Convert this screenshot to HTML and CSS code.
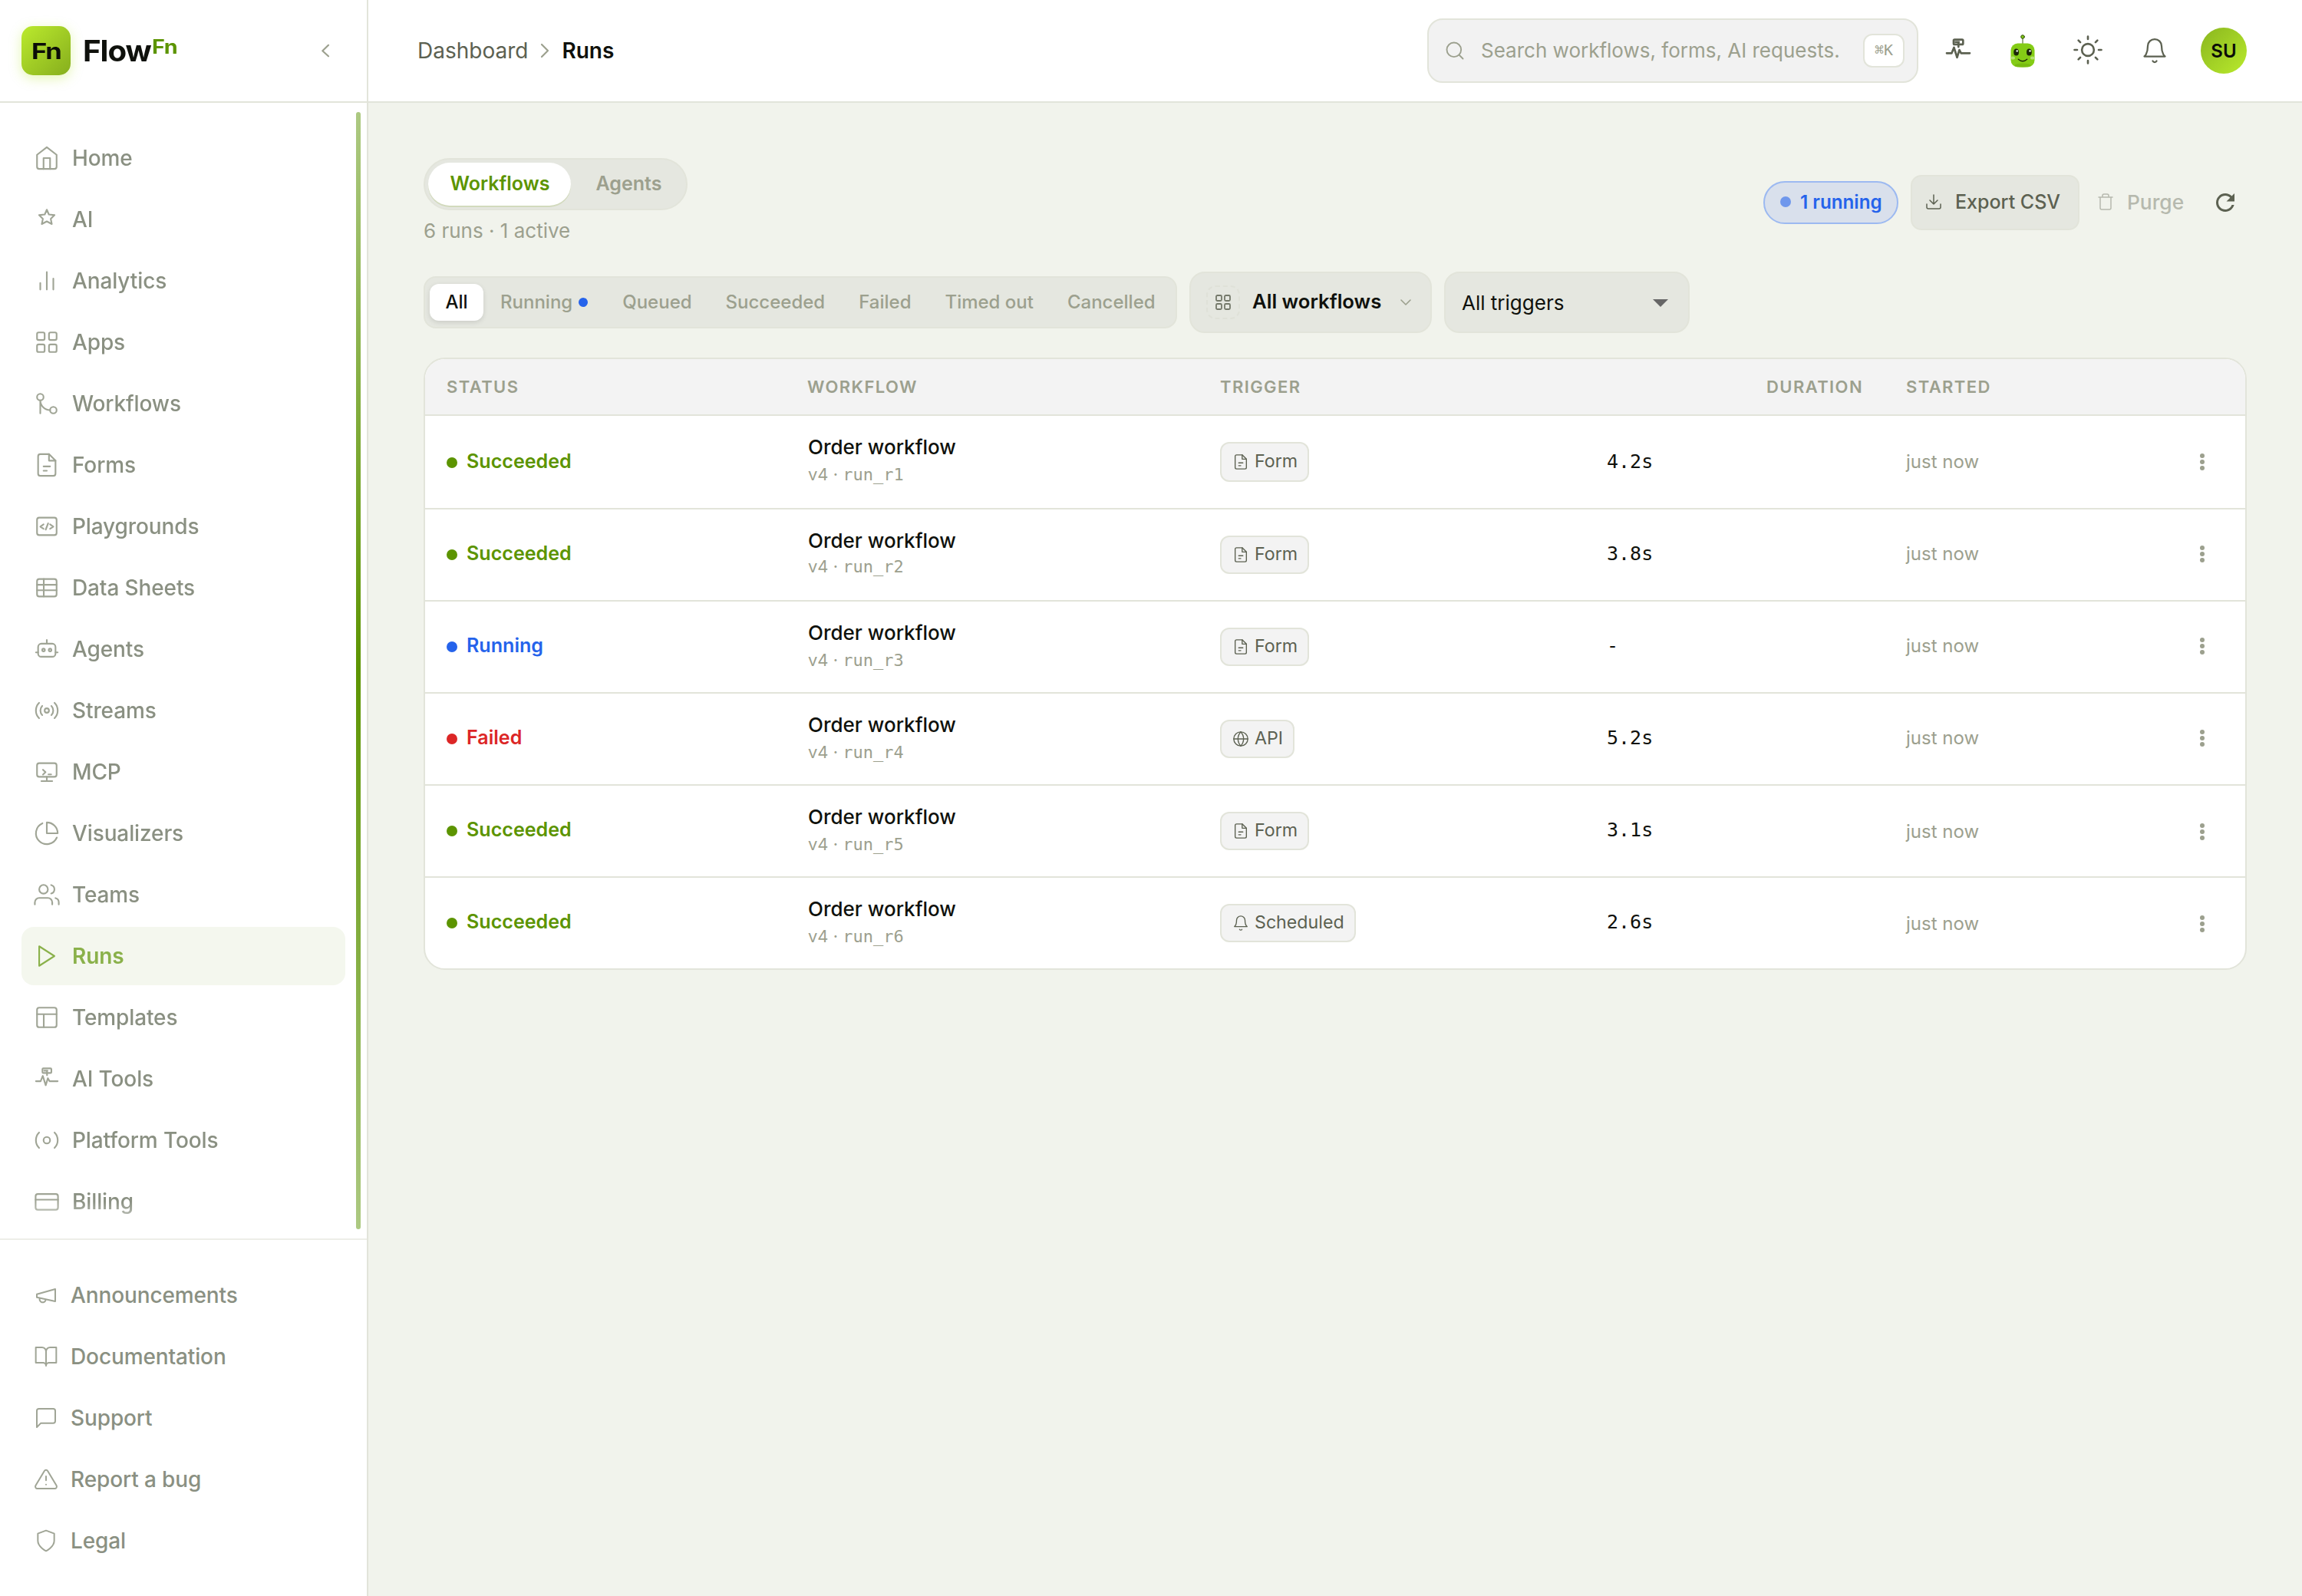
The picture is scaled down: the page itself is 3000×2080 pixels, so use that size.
FILE: index.html
```html
<!DOCTYPE html>
<html lang="en">
<head>
<meta charset="utf-8">
<title>FlowFn - Runs</title>
<link rel="stylesheet" href="styles.css">
</head>
<body>
<svg class="sprite" aria-hidden="true">
  <symbol id="i-home" viewBox="0 0 24 24"><path d="M3 9l9-7 9 7v11a2 2 0 0 1-2 2H5a2 2 0 0 1-2-2z"/><path d="M9 22V12h6v10"/></symbol>
  <symbol id="i-star" viewBox="0 0 24 24"><path d="M12 3l1.900 4.400 5.200.6-3.500 3.400 1 4.800L12 13.800l-4.600 2.400 1-4.800L4.900 8l5.200-.6z"/></symbol>
  <symbol id="i-bars" viewBox="0 0 24 24"><path d="M18 20V10M12 20V4M6 20v-6"/></symbol>
  <symbol id="i-grid" viewBox="0 0 24 24"><rect x="3" y="3" width="7" height="7" rx="1.5"/><rect x="14" y="3" width="7" height="7" rx="1.5"/><rect x="3" y="14" width="7" height="7" rx="1.5"/><rect x="14" y="14" width="7" height="7" rx="1.5"/></symbol>
  <symbol id="i-flow" viewBox="0 0 24 24"><circle cx="6" cy="6" r="3"/><circle cx="18" cy="18" r="3"/><path d="M6 9v12M6 9a9 9 0 0 0 9 9"/></symbol>
  <symbol id="i-file" viewBox="0 0 24 24"><path d="M14 2H6a2 2 0 0 0-2 2v16a2 2 0 0 0 2 2h12a2 2 0 0 0 2-2V8z"/><path d="M14 2v6h6M9 13.300h6M9 17.300h3"/></symbol>
  <symbol id="i-code" viewBox="0 0 24 24"><rect x="3" y="4" width="18" height="16" rx="2"/><path d="M9 10.200l-3 2 3 2M13.200 9.200L11 15M15 10.200l3 2-3 2"/></symbol>
  <symbol id="i-sheet" viewBox="0 0 24 24"><rect x="3" y="4" width="18" height="16" rx="2"/><path d="M3 9.300h18M3 14.300h18M9.200 4v16"/></symbol>
  <symbol id="i-agent" viewBox="0 0 24 24"><rect x="4" y="7" width="16" height="12" rx="3"/><path d="M12 3.500V7M2 15h2M20 15h2"/><circle cx="9" cy="12.800" r="1.200"/><circle cx="15" cy="12.800" r="1.200"/></symbol>
  <symbol id="i-stream" viewBox="0 0 24 24"><circle cx="12" cy="12" r="2"/><path d="M4.900 19.100C1 15.200 1 8.800 4.900 4.900M7.800 16.200c-2.300-2.300-2.300-6.100 0-8.500M16.200 7.800c2.300 2.300 2.300 6.100 0 8.500M19.100 4.900C23 8.800 23 15.100 19.100 19"/></symbol>
  <symbol id="i-mcp" viewBox="0 0 24 24"><rect x="3" y="4" width="18" height="12.500" rx="2"/><path d="M12 16.500v4M7 20.500h10M8.500 10l2.300 2.200-2.300 2.200M13.500 14.300H16"/></symbol>
  <symbol id="i-pie" viewBox="0 0 24 24"><path d="M21.200 15.900A10 10 0 1 1 8 2.800"/><path d="M22 12A10 10 0 0 0 12 2v10z"/></symbol>
  <symbol id="i-users" viewBox="0 0 24 24"><path d="M17 21v-2a4 4 0 0 0-4-4H5a4 4 0 0 0-4 4v2"/><circle cx="9" cy="7" r="4"/><path d="M23 21v-2a4 4 0 0 0-3-3.870M16 3.130a4 4 0 0 1 0 7.750"/></symbol>
  <symbol id="i-play" viewBox="0 0 24 24"><path d="M5 3l14 9-14 9z"/></symbol>
  <symbol id="i-layout" viewBox="0 0 24 24"><rect x="3" y="3" width="18" height="18" rx="2"/><path d="M3 9h18M9.200 9v12"/></symbol>
  <symbol id="i-pulse" viewBox="0 0 24 24"><rect x="8" y="2.400" width="8.200" height="4.200" rx=".8"/><path d="M9.600 4.500h3M12.200 4.500v4.200M2 14.200h4.300L8.300 9.300l2.700 8.600 2-6.500 1.500 2.800H22"/></symbol>
  <symbol id="i-platform" viewBox="0 0 24 24"><circle cx="12" cy="12" r="3"/><path d="M4.900 19.100C1 15.200 1 8.800 4.900 4.900M19.100 4.900C23 8.800 23 15.100 19.100 19"/></symbol>
  <symbol id="i-card" viewBox="0 0 24 24"><rect x="1.700" y="5" width="20.600" height="14.500" rx="2"/><path d="M1.700 10.200h20.600"/></symbol>
  <symbol id="i-horn" viewBox="0 0 24 24"><path d="M3 11l18-5v12L3 14z"/><path d="M11.600 16.800a3 3 0 1 1-5.800-1.600"/></symbol>
  <symbol id="i-book" viewBox="0 0 24 24"><path d="M2 3h6a4 4 0 0 1 4 4v14a3 3 0 0 0-3-3H2zM22 3h-6a4 4 0 0 0-4 4v14a3 3 0 0 1 3-3h7z"/></symbol>
  <symbol id="i-chat" viewBox="0 0 24 24"><path d="M21 15a2 2 0 0 1-2 2H7l-4 4V5a2 2 0 0 1 2-2h14a2 2 0 0 1 2 2z"/></symbol>
  <symbol id="i-alert" viewBox="0 0 24 24"><path d="M10.290 3.860L1.820 18a2 2 0 0 0 1.710 3h16.940a2 2 0 0 0 1.710-3L13.710 3.860a2 2 0 0 0-3.420 0zM12 9v4M12 17h.01"/></symbol>
  <symbol id="i-shield" viewBox="0 0 24 24"><path d="M12 22s8-4 8-10V5l-8-3-8 3v7c0 6 8 10 8 10z"/></symbol>
  <symbol id="i-search" viewBox="0 0 24 24"><circle cx="11" cy="11" r="8"/><path d="M21 21l-4.300-4.300"/></symbol>
  <symbol id="i-sun" viewBox="0 0 24 24"><circle cx="12" cy="12" r="4.500"/><path d="M12 2v2M12 20v2M4.930 4.930l1.410 1.410M17.660 17.660l1.410 1.410M2 12h2M20 12h2M6.340 17.660l-1.410 1.410M19.070 4.930l-1.410 1.410"/></symbol>
  <symbol id="i-bell" viewBox="0 0 24 24"><path d="M6 8a6 6 0 0 1 12 0c0 7 3 9 3 9H3s3-2 3-9"/><path d="M10.300 21a1.940 1.940 0 0 0 3.400 0"/></symbol>
  <symbol id="i-download" viewBox="0 0 24 24"><path d="M21 15v4a2 2 0 0 1-2 2H5a2 2 0 0 1-2-2v-4M7 10l5 5 5-5M12 15V3"/></symbol>
  <symbol id="i-trash" viewBox="0 0 24 24"><path d="M3 6h18M19 6v14a2 2 0 0 1-2 2H7a2 2 0 0 1-2-2V6M8 6V4a2 2 0 0 1 2-2h4a2 2 0 0 1 2 2v2"/></symbol>
  <symbol id="i-refresh" viewBox="0 0 24 24"><path d="M17.650 6.350A7.958 7.958 0 0 0 12 4c-4.420 0-7.990 3.580-7.990 8s3.570 8 7.990 8c3.730 0 6.840-2.550 7.730-6h-2.080c-.82 2.330-3.040 4-5.650 4-3.310 0-6-2.690-6-6s2.690-6 6-6c1.660 0 3.140.69 4.220 1.780L13 11h7V4z"/></symbol>
  <symbol id="i-globe" viewBox="0 0 24 24"><circle cx="12" cy="12" r="10"/><path d="M2 12h20M12 2a15.300 15.300 0 0 1 4 10 15.300 15.300 0 0 1-4 10 15.300 15.300 0 0 1-4-10 15.300 15.300 0 0 1 4-10z"/></symbol>
  <symbol id="i-more" viewBox="0 0 24 24"><circle cx="12" cy="4" r="3"/><circle cx="12" cy="12" r="3"/><circle cx="12" cy="20" r="3"/></symbol>
</svg>

<div class="app">
  <aside class="sidebar">
    <div class="brand">
      <div class="brand-mark"><span>Fn</span></div>
      <div class="brand-name">Flow</div>
      <div class="brand-sup">Fn</div>
      <svg class="collapse" viewBox="0 0 24 24"><path d="M16 4.800L8.300 12.300l7.700 7"/></svg>
    </div>
    <div class="nav-wrap">
      <nav class="nav">
        <a class="nav-item"><svg><use href="#i-home"/></svg>Home</a>
        <a class="nav-item"><svg><use href="#i-star"/></svg>AI</a>
        <a class="nav-item"><svg><use href="#i-bars"/></svg>Analytics</a>
        <a class="nav-item"><svg><use href="#i-grid"/></svg>Apps</a>
        <a class="nav-item"><svg><use href="#i-flow"/></svg>Workflows</a>
        <a class="nav-item"><svg><use href="#i-file"/></svg>Forms</a>
        <a class="nav-item"><svg><use href="#i-code"/></svg>Playgrounds</a>
        <a class="nav-item"><svg><use href="#i-sheet"/></svg>Data Sheets</a>
        <a class="nav-item"><svg><use href="#i-agent"/></svg>Agents</a>
        <a class="nav-item"><svg><use href="#i-stream"/></svg>Streams</a>
        <a class="nav-item"><svg><use href="#i-mcp"/></svg>MCP</a>
        <a class="nav-item"><svg><use href="#i-pie"/></svg>Visualizers</a>
        <a class="nav-item"><svg><use href="#i-users"/></svg>Teams</a>
        <a class="nav-item active"><svg><use href="#i-play"/></svg>Runs</a>
        <a class="nav-item"><svg><use href="#i-layout"/></svg>Templates</a>
        <a class="nav-item"><svg><use href="#i-pulse"/></svg>AI Tools</a>
        <a class="nav-item"><svg><use href="#i-platform"/></svg>Platform Tools</a>
        <a class="nav-item"><svg><use href="#i-card"/></svg>Billing</a>
      </nav>
      <div class="scrollbar"></div>
    </div>
    <nav class="nav nav-footer">
      <a class="nav-item"><svg><use href="#i-horn"/></svg>Announcements</a>
      <a class="nav-item"><svg><use href="#i-book"/></svg>Documentation</a>
      <a class="nav-item"><svg><use href="#i-chat"/></svg>Support</a>
      <a class="nav-item"><svg><use href="#i-alert"/></svg>Report a bug</a>
      <a class="nav-item"><svg><use href="#i-shield"/></svg>Legal</a>
    </nav>
  </aside>

  <div class="page">
    <header class="topbar">
      <div class="crumbs">
        <span>Dashboard</span>
        <svg viewBox="0 0 12 20"><path d="M2 2l8 8-8 8"/></svg>
        <b>Runs</b>
      </div>
      <div class="search">
        <svg><use href="#i-search"/></svg>
        <span>Search workflows, forms, AI requests.</span>
        <kbd>⌘K</kbd>
      </div>
      <div class="tools">
        <button class="tool pulse"><svg><use href="#i-pulse"/></svg></button>
        <button class="tool robot">
          <svg viewBox="0 0 36 44">
            <path d="M18 4v10" stroke="#3d5a12" stroke-width="1"/>
            <circle cx="18" cy="4" r="2.300" fill="#84cc16" stroke="#2f4a0c" stroke-width="1"/>
            <rect x="2.500" y="12.500" width="31" height="31" rx="9" fill="#84cc16"/>
            <ellipse cx="18" cy="41" rx="10.500" ry="2.500" fill="#78bb12"/>
            <ellipse cx="9.600" cy="24" rx="3.400" ry="4.500" fill="#1a2608"/>
            <ellipse cx="26.400" cy="24" rx="3.400" ry="4.500" fill="#1a2608"/>
            <circle cx="10.700" cy="22.400" r="1.200" fill="#fff"/>
            <circle cx="27.500" cy="22.400" r="1.200" fill="#fff"/>
            <ellipse cx="5.200" cy="31.500" rx="2.800" ry="2" fill="#b5e373"/>
            <ellipse cx="30.800" cy="31.500" rx="2.800" ry="2" fill="#b5e373"/>
            <path d="M12.300 33.300q5.700 5 11.400 0" fill="none" stroke="#1a2608" stroke-width="1.300" stroke-linecap="round"/>
          </svg>
        </button>
        <button class="tool sun"><svg><use href="#i-sun"/></svg></button>
        <button class="tool bell"><svg><use href="#i-bell"/></svg></button>
        <div class="avatar">SU</div>
      </div>
    </header>

    <main class="content">
      <section class="page-head">
        <div>
          <div class="tabs"><button class="tab on">Workflows</button><button class="tab">Agents</button></div>
          <p class="summary">6 runs · 1 active</p>
        </div>
        <div class="actions">
          <span class="running-pill"><i></i>1 running</span>
          <button class="export"><svg><use href="#i-download"/></svg>Export CSV</button>
          <button class="purge"><svg><use href="#i-trash"/></svg>Purge</button>
          <button class="refresh"><svg><use href="#i-refresh"/></svg></button>
        </div>
      </section>

      <section class="filters">
        <div class="segments">
          <button class="seg on">All</button>
          <button class="seg">Running<i></i></button>
          <button class="seg">Queued</button>
          <button class="seg">Succeeded</button>
          <button class="seg">Failed</button>
          <button class="seg">Timed out</button>
          <button class="seg">Cancelled</button>
        </div>
        <div class="select workflow-select">
          <span class="select-icon"><svg><use href="#i-grid"/></svg></span>
          <span class="select-label">All workflows</span>
          <svg class="chev" viewBox="0 0 16 10"><path d="M2 2l6 6 6-6"/></svg>
        </div>
        <div class="select trigger-select">
          <span>All triggers</span>
          <svg class="caret" viewBox="0 0 20 10"><path d="M0 0h20L10 10z"/></svg>
        </div>
      </section>

      <section class="table">
        <div class="row head"><span>Status</span><span>Workflow</span><span>Trigger</span><span class="right">Duration</span><span>Started</span><span></span></div>
        <div class="row first">
          <span class="status ok"><i></i>Succeeded</span>
          <span class="flow"><b>Order workflow</b><small>v4 · <code>run_r1</code></small></span>
          <span><em class="badge"><svg><use href="#i-file"/></svg><span>Form</span></em></span>
          <span class="duration">4.2s</span><span class="started">just now</span>
          <span class="menu"><svg><use href="#i-more"/></svg></span>
        </div>
        <div class="row snug">
          <span class="status ok"><i></i>Succeeded</span>
          <span class="flow"><b>Order workflow</b><small>v4 · <code>run_r2</code></small></span>
          <span><em class="badge"><svg><use href="#i-file"/></svg><span>Form</span></em></span>
          <span class="duration">3.8s</span><span class="started">just now</span>
          <span class="menu"><svg><use href="#i-more"/></svg></span>
        </div>
        <div class="row">
          <span class="status live"><i></i>Running</span>
          <span class="flow"><b>Order workflow</b><small>v4 · <code>run_r3</code></small></span>
          <span><em class="badge"><svg><use href="#i-file"/></svg><span>Form</span></em></span>
          <span class="duration">-</span><span class="started">just now</span>
          <span class="menu"><svg><use href="#i-more"/></svg></span>
        </div>
        <div class="row">
          <span class="status bad"><i></i>Failed</span>
          <span class="flow"><b>Order workflow</b><small>v4 · <code>run_r4</code></small></span>
          <span><em class="badge"><svg><use href="#i-globe"/></svg><span>API</span></em></span>
          <span class="duration">5.2s</span><span class="started">just now</span>
          <span class="menu"><svg><use href="#i-more"/></svg></span>
        </div>
        <div class="row low">
          <span class="status ok"><i></i>Succeeded</span>
          <span class="flow"><b>Order workflow</b><small>v4 · <code>run_r5</code></small></span>
          <span><em class="badge"><svg><use href="#i-file"/></svg><span>Form</span></em></span>
          <span class="duration">3.1s</span><span class="started">just now</span>
          <span class="menu"><svg><use href="#i-more"/></svg></span>
        </div>
        <div class="row low">
          <span class="status ok"><i></i>Succeeded</span>
          <span class="flow"><b>Order workflow</b><small>v4 · <code>run_r6</code></small></span>
          <span><em class="badge"><svg><use href="#i-bell"/></svg><span>Scheduled</span></em></span>
          <span class="duration">2.6s</span><span class="started">just now</span>
          <span class="menu"><svg><use href="#i-more"/></svg></span>
        </div>
      </section>
    </main>
  </div>
</div>
</body>
</html>
```
FILE: styles.css
```css
:root {
  --bg: #f1f3ec;
  --line: #e2e4da;
  --fill: #e5e7e0;
  --soft: #f3f3f3;
  --muted: #9ca08e;
  --nav: #8a9082;
  --text: #5c6151;
  --ink: #0f110c;
  --green: #5c9400;
  --blue: #2563eb;
  --red: #dc2626;
}
* { box-sizing: border-box; }
body { margin: 0; font-family: Inter, "Liberation Sans", sans-serif; color: var(--ink); background: var(--bg); }
button { font: inherit; color: inherit; background: none; border: 0; padding: 0; margin: 0; display: flex; align-items: center; }
svg { fill: none; stroke: currentColor; stroke-width: 1.5; stroke-linecap: round; stroke-linejoin: round; flex: none; display: block; }
.sprite { display: none; }

.app { display: flex; width: 3000px; height: 2080px; overflow: hidden; }

/* Sidebar */
.sidebar { width: 480px; flex: none; display: flex; flex-direction: column; background: #fff; border-right: 2px solid var(--line); }
.brand { height: 134px; flex: none; display: flex; align-items: center; padding: 0 42px 0 28px; border-bottom: 2px solid var(--line); }
.brand-mark { width: 64px; height: 64px; border-radius: 15px; display: flex; align-items: center; justify-content: center; background: linear-gradient(135deg, #bbea2d, #86ae1d); box-shadow: 0 4px 16px rgba(180, 230, 40, .35); font-weight: 700; font-size: 29px; letter-spacing: -1px; color: #0b0d08; }
.brand-mark span { transform: scaleX(1.19); }
.brand-name { margin-left: 16px; font-weight: 700; font-size: 38px; line-height: 46px; letter-spacing: -1px; transform: scaleX(1.060); transform-origin: left; }
.brand-sup { margin: 0 0 11px 6px; font-weight: 700; font-size: 25px; line-height: 30px; letter-spacing: -.5px; color: var(--green); transform: scaleX(1.150); transform-origin: left; }
.collapse { width: 24px; height: 24px; margin-left: auto; color: var(--muted); stroke-width: 2.2; }
.nav-wrap { position: relative; flex: 1; }
.nav { display: flex; flex-direction: column; gap: 4px; padding: 34px 28px 0; }
.nav-wrap .nav { height: 1480px; -webkit-mask-image: linear-gradient(#000 1432px, transparent 1480px); mask-image: linear-gradient(#000 1432px, transparent 1480px); }
.nav-item { width: 422px; height: 76px; flex: none; display: flex; align-items: center; gap: 16px; padding: 0 16px; border-radius: 16px; font-size: 28px; font-weight: 500; letter-spacing: -.12px; color: var(--nav); }
.nav-item svg { width: 34px; height: 34px; color: #a0a596; }
.nav-item.active { background: #f4f7ee; color: #8ab14a; font-weight: 600; }
.nav-item.active svg { color: #8ab14a; }
.nav-footer { height: 466px; flex: none; border-top: 2px solid #edeee8; }
.nav-footer .nav-item svg { width: 32px; height: 32px; }
.scrollbar { position: absolute; top: 12px; right: 8px; width: 6px; height: 1456px; border-radius: 3px; background: linear-gradient(#adc982, var(--green) 50%, #adc982); }

/* Top bar */
.page { flex: 1; display: flex; flex-direction: column; }
.topbar { height: 134px; flex: none; display: flex; align-items: center; padding: 0 72px 0 64px; background: #fff; border-bottom: 2px solid var(--line); }
.crumbs { display: flex; align-items: center; gap: 16px; font-size: 28px; font-weight: 400; color: var(--text); }
.crumbs svg { width: 12px; height: 20px; color: var(--muted); stroke-width: 2.2; }
.crumbs b { font-weight: 600; color: var(--ink); }
.search { width: 640px; height: 84px; margin-left: auto; display: flex; align-items: center; padding: 0 16px 0 20px; background: #f2f2f2; border: 2px solid var(--line); border-radius: 20px; font-size: 26px; color: var(--muted); }
.search svg { width: 28px; height: 28px; stroke-width: 1.6; }
.search span { margin-left: 20px; margin-top: -2px; white-space: nowrap; }
.search kbd { width: 54px; height: 44px; margin-left: auto; display: flex; align-items: center; justify-content: center; padding-bottom: 3px; background: #fff; border: 2px solid var(--line); border-radius: 12px; font: 20px "DejaVu Sans Mono", monospace; }
.tools { display: flex; align-items: center; gap: 12px; margin-left: 16px; color: var(--text); }
.tool { width: 72px; height: 72px; justify-content: center; }
.tool svg { width: 36px; height: 36px; }
.pulse svg { stroke-width: 1.8; }
.robot svg { width: 36px; height: 44px; stroke: none; }
.sun svg { width: 42px; height: 42px; margin: -2px 0 0 2px; }
.bell { margin-left: 4px; }
.avatar { width: 60px; height: 60px; margin-left: 12px; border-radius: 50%; display: flex; align-items: center; justify-content: center; background: linear-gradient(135deg, #8ab61f, #b9ea2c); font-size: 24px; font-weight: 600; color: #0b0d08; }

/* Content */
.content { padding: 72px 72px 0; }
.page-head { display: flex; justify-content: space-between; height: 116px; }
.tabs { width: 344px; height: 68px; display: flex; padding: 4px; background: var(--fill); border: 2px solid var(--line); border-radius: 34px; }
.tab { flex: none; height: 56px; padding: 0 0 2px; justify-content: center; width: 151px; border-radius: 28px; font-size: 25px; font-weight: 600; color: var(--muted); }
.tab.on { width: 186px; padding-left: 1px; background: #fff; color: var(--green); box-shadow: 0 2px 0 #d2dabd; }
.summary { margin: 7px 0 0; font-size: 26px; line-height: 40px; color: var(--muted); }
.actions { display: flex; align-items: center; }
.running-pill { width: 176px; height: 56px; display: flex; align-items: center; gap: 12px; padding: 0 0 2px 20px; background: #d9e0ec; border: 2px solid #9cb9f1; border-radius: 28px; font-size: 24.200px; font-weight: 600; color: var(--blue); white-space: nowrap; }
.running-pill i { width: 14px; height: 14px; border-radius: 50%; background: #6f97ec; }
.export { width: 220px; height: 72px; margin-left: 16px; gap: 16px; padding: 0 0 2px 16px; background: var(--fill); border: 2px solid var(--line); border-radius: 14px; font-size: 25px; font-weight: 500; color: var(--text); white-space: nowrap; }
.export svg, .purge svg { width: 24px; height: 24px; }
.purge { width: 140px; height: 72px; margin-left: 16px; gap: 16px; padding: 0 0 2px 6px; font-size: 26.300px; font-weight: 500; color: #b6b9ae; }
.refresh { width: 58px; height: 56px; margin-left: 4px; justify-content: center; color: var(--text); }
.refresh svg { width: 36px; height: 36px; margin-left: 2px; fill: currentColor; stroke: none; }

.filters { display: flex; align-items: center; gap: 16px; height: 80px; margin-top: 32px; }
.segments { width: 982px; height: 68px; display: flex; align-items: center; gap: 4px; padding: 0 6px; background: var(--fill); border: 2px solid var(--line); border-radius: 16px; }
.seg { flex: none; height: 48px; padding: 0 20px 2px; border-radius: 12px; font-size: 24px; font-weight: 500; color: var(--muted); white-space: nowrap; }
.seg.on { width: 70px; padding: 0 0 2px; justify-content: center; background: #fff; color: var(--ink); box-shadow: 0 2px 6px rgba(0, 0, 0, .12); }
.seg i { width: 12px; height: 12px; margin: 2px 0 0 8px; border-radius: 50%; background: var(--blue); }
.seg:nth-child(2) { padding-right: 4px; margin: 0 17px 0 -2px; }
.select { height: 80px; display: flex; align-items: center; background: var(--fill); border: 2px solid var(--line); border-radius: 20px; font-size: 26px; white-space: nowrap; }
.workflow-select { width: 316px; padding-left: 20px; font-size: 25.700px; font-weight: 600; }
.select-icon { width: 44px; height: 44px; margin-right: 16px; display: flex; align-items: center; justify-content: center; border: 2px dashed #dfe1d8; border-radius: 12px; color: #74796a; }
.select-icon svg { width: 24px; height: 24px; stroke-width: 1.800; }
.select-label { margin-top: -3px; }
.chev { width: 16px; height: 10px; margin: 0 24px 0 auto; color: var(--muted); stroke-width: 1.600; }
.trigger-select { width: 320px; padding: 1px 26px 0 21px; justify-content: space-between; }
.caret { width: 20px; height: 10px; fill: #666; stroke: none; }

/* Runs table */
.table { margin-top: 32px; background: #fff; border: 2px solid var(--line); border-radius: 28px; overflow: hidden; }
.row { height: 120px; display: grid; grid-template-columns: 470px 538px 504px 390px 358px 112px; align-items: center; border-bottom: 2px solid var(--line); }
.row > span { padding-left: 28px; }
.row:last-child { height: 118px; border-bottom: 0; }
.row.first { height: 122px; }
.row.head { height: 74px; background: var(--soft); font-size: 22px; font-weight: 600; letter-spacing: 1.400px; text-transform: uppercase; color: var(--muted); }
.row.head .right { padding-right: 28px; text-align: right; }
.row > .status { display: flex; align-items: center; gap: 12px; padding-bottom: 4px; font-size: 25.100px; font-weight: 600; }
.row.first > .status { padding-bottom: 2px; }
.status i { width: 14px; height: 14px; margin-top: 4px; border-radius: 50%; background: currentColor; }
.ok { color: var(--green); }
.live { color: var(--blue); }
.bad { color: var(--red); }
.row > .flow { align-self: start; padding: 22px 0 0 29px; display: flex; flex-direction: column; }
.flow b { font-size: 26px; line-height: 38px; font-weight: 500; }
.flow small { font-size: 22px; line-height: 32px; color: var(--muted); }
.flow code { font: 22px "DejaVu Sans Mono", monospace; line-height: 1; }
.snug small { margin-top: -2px; }
.badge { height: 50px; display: inline-flex; align-items: center; gap: 7px; padding: 0 13px 0 14px; vertical-align: top; background: var(--soft); border: 2px solid var(--line); border-radius: 12px; font-size: 23.200px; font-style: normal; font-weight: 400; color: var(--text); }
.badge svg { width: 22px; height: 22px; }
.badge span { margin-top: -3px; }
.first .badge { height: 52px; }
.row > .duration { padding-bottom: 3px; font: 25px "DejaVu Sans Mono", monospace; }
.row.first > .duration { padding-bottom: 1px; }
.row > .started { padding-bottom: 3px; font-size: 24px; color: var(--muted); }
.first > .started { padding-bottom: 1px; }
.low > .started { padding-bottom: 0; }
.row > .menu { display: flex; justify-content: center; padding: 0 0 2px; color: var(--muted); }
.first > .menu { padding-bottom: 0; }
.low > .menu { padding: 2px 0 0; }
.menu svg { width: 24px; height: 24px; fill: currentColor; stroke: none; }
```
